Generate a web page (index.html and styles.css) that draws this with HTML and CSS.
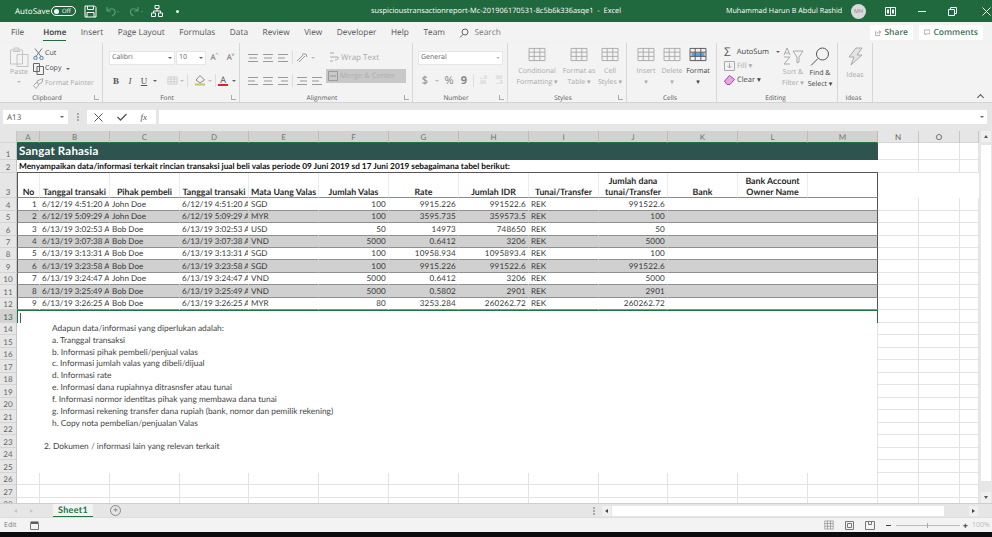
FILE: index.html
```html
<!DOCTYPE html>
<html lang="en">
<head>
<meta charset="utf-8">
<title>Excel</title>
<link rel="stylesheet" href="styles.css">
</head>
<body>
<svg class="defs" width="0" height="0">
  <symbol id="lines-c" viewBox="0 0 12 10"><path d="M1 1.500h10M2 5h8M1 8.500h10" fill="none" stroke="currentColor"/></symbol>
  <symbol id="lines-l" viewBox="0 0 12 10"><path d="M1 1.500h10M1 5h7M1 8.500h10" fill="none" stroke="currentColor"/></symbol>
  <symbol id="lines-r" viewBox="0 0 12 10"><path d="M1 1.500h10M4 5h7M1 8.500h10" fill="none" stroke="currentColor"/></symbol>
  <symbol id="tbl" viewBox="0 0 20 16"><path d="M1.500 1.500h17v13h-17zM1.500 5.500h17M1.500 10h17M7 1.500v13M13 1.500v13" fill="none" stroke="currentColor"/></symbol>
</svg>

<div class="app">
  <header class="title">
    <div class="qa">
      <span class="autosave">AutoSave</span>
      <span class="toggle"><i></i>Off</span>
      <svg class="ic-save" width="13" height="13" viewBox="0 0 13 13"><path d="M1 1h9.500L12 2.500V12H1zM3.500 1v3.500h6V1M3 12V7.500h7V12" fill="none" stroke="#fff"/></svg>
      <svg class="ic-undo" width="14" height="11" viewBox="0 0 14 11"><path d="M2 1v4h4M2 5c2-3 7-3 8 0s-1 4-3 5" fill="none" stroke="#5c9a78" stroke-width="1.200"/><path d="M12 5h2l-1 1.500z" fill="#5c9a78"/></svg>
      <svg class="ic-redo" width="14" height="11" viewBox="0 0 14 11"><path d="M9 1v4H5M9 5C7 2 2 2 1.500 5s1 4 3 5" fill="none" stroke="#5c9a78" stroke-width="1.200"/><path d="M12 5h2l-1 1.500z" fill="#5c9a78"/></svg>
      <svg class="ic-tree" width="12" height="12" viewBox="0 0 12 12"><path d="M4 .5h4v3H4zM.5 8h4v3.500h-4zM7.500 8h4v3.500h-4zM6 3.500V6M2.500 8V6h7v2" fill="none" stroke="#fff"/></svg>
      <span class="qa-more"></span>
    </div>
    <div class="docname">suspicioustransactionreport-Mc-201906170531-8c5b6k336asqe1&nbsp; -&nbsp; Excel</div>
    <div class="win">
      <span class="user">Muhammad Harun B Abdul Rashid</span>
      <span class="avatar">MH</span>
      <svg class="ic-ribbon" width="11" height="9" viewBox="0 0 11 9"><path d="M.5.500h10v8H.5zM5.500.5v8" fill="none" stroke="#fff"/><path d="M2 2.500h2v4H2zM7 2.500h2v4H7z" fill="#fff"/></svg>
      <span class="min"></span>
      <svg class="ic-max" width="9" height="9" viewBox="0 0 9 9"><path d="M.5 2.500h6v6h-6zM2.500 2.500v-2h6v6h-2" fill="none" stroke="#fff"/></svg>
      <svg class="ic-close" width="9" height="9" viewBox="0 0 9 9"><path d="M.5.5l8 8M8.500.5l-8 8" stroke="#fff" fill="none"/></svg>
    </div>
  </header>

  <nav class="tabs">
    <span class="tab t-file">File</span>
    <span class="tab active">Home</span>
    <span class="tab">Insert</span>
    <span class="tab">Page Layout</span>
    <span class="tab">Formulas</span>
    <span class="tab">Data</span>
    <span class="tab">Review</span>
    <span class="tab">View</span>
    <span class="tab">Developer</span>
    <span class="tab">Help</span>
    <span class="tab">Team</span>
    <span class="tab search"><svg width="10" height="10" viewBox="0 0 10 10"><circle cx="6" cy="4" r="3" fill="none" stroke="#666"/><path d="M4 6.500L1 9.500" stroke="#666"/></svg>Search</span>
    <span class="tab-actions">
      <span class="pill share"><svg width="10" height="10" viewBox="0 0 10 10"><path d="M6 1l3 2.500L6 6M9 3.500H6C4 3.500 3 5 3 6.500M7.500 7v2h-7V3H2" fill="none" stroke="#888"/></svg>Share</span>
      <span class="pill comments"><svg width="10" height="9" viewBox="0 0 10 9"><path d="M.5.500h9v6H4L2 8.500v-2H.5z" fill="none" stroke="#888"/></svg>Comments</span>
    </span>
  </nav>

  <section class="ribbon">
    <div class="grp g-clip">
      <div class="body clip-body">
        <div class="paste">
          <svg width="20" height="20" viewBox="0 0 20 20"><path d="M1.500 3h12v14h-12zM5 3V1h5v2M4 4.500h7M8 7.500h11v12H8z" fill="#f3f3f3" stroke="#c4c4c4"/></svg>
          <span class="dis">Paste</span>
          <span class="caret dis-caret"></span>
        </div>
        <div class="clip-list">
          <div class="clip-item"><svg width="11" height="12" viewBox="0 0 11 12"><path d="M2 .5l6 8M9 .5l-6 8" stroke="#777" fill="none"/><circle cx="2.500" cy="10" r="1.700" fill="none" stroke="#3f7fc1"/><circle cx="8.500" cy="10" r="1.700" fill="none" stroke="#3f7fc1"/></svg>Cut</div>
          <div class="clip-item"><svg width="11" height="12" viewBox="0 0 11 12"><path d="M.5.500h6v8h-6zM4 3.500h6.500v8H4z" fill="#f3f3f3" stroke="#666"/></svg>Copy<span class="caret copy-caret"></span></div>
          <div class="clip-item dis"><svg width="11" height="11" viewBox="0 0 11 11"><path d="M4 3l6-2.500-1 4-4 2zM4 4L.5 7.500 3 10.500 6 7" fill="none" stroke="#aaa"/></svg>Format Painter</div>
        </div>
      </div>
      <div class="label"><span>Clipboard</span><i class="launch"></i></div>
    </div>

    <div class="grp g-font">
      <div class="body stack">
        <div class="line">
          <span class="combo c-font">Calibri<i class="caret"></i></span>
          <span class="combo c-size">10<i class="caret"></i></span>
          <span class="grow">A<sup>^</sup></span>
          <span class="grow">A<sup>v</sup></span>
        </div>
        <div class="line fmt">
          <b class="f-btn">B</b>
          <i class="f-btn f-next">I</i>
          <u class="f-btn f-next">U</u>
          <span class="caret f-c1"></span>
          <svg class="f-border" width="11" height="11"><use href="#tbl"/></svg>
          <span class="caret dis-caret f-c2"></span>
          <span class="sep f-s"></span>
          <svg class="f-fill" width="12" height="11" viewBox="0 0 12 11"><path d="M6 .5L10.500 5 6 8 2 5z" fill="none" stroke="#888"/><path d="M1 9.500h10" stroke="#c9c46a" stroke-width="2"/></svg>
          <span class="caret dis-caret f-c2"></span>
          <span class="sep f-s"></span>
          <span class="fcolor">A</span>
          <span class="caret f-c3"></span>
        </div>
      </div>
      <div class="label"><span>Font</span><i class="launch"></i></div>
    </div>

    <div class="grp g-align">
      <div class="body align-body">
        <div class="stack align-icons">
          <div class="line">
            <svg class="i12"><use href="#lines-c"/></svg>
            <svg class="i12"><use href="#lines-c"/></svg>
            <svg class="i12"><use href="#lines-l"/></svg>
            <span class="sep"></span>
            <svg width="12" height="10" viewBox="0 0 12 10"><path d="M1 8l6-6M3 9l6-6M6 1h4l1 3" fill="none" stroke="currentColor"/></svg>
            <span class="caret dis-caret"></span>
          </div>
          <div class="line">
            <svg class="i12"><use href="#lines-l"/></svg>
            <svg class="i12"><use href="#lines-c"/></svg>
            <svg class="i12"><use href="#lines-r"/></svg>
            <span class="sep"></span>
            <svg class="i12"><use href="#lines-r"/></svg>
            <svg class="i12"><use href="#lines-l"/></svg>
          </div>
        </div>
        <div class="stack wrap-col">
          <div class="wrap dis"><svg width="10" height="11" viewBox="0 0 10 11"><path d="M1 1h4M1 5h8c1 2-1 3-3 3M1 9h3" fill="none" stroke="#aaa"/></svg>Wrap Text</div>
          <div class="merge"><svg width="10" height="10" viewBox="0 0 10 10"><path d="M.5.500h9v9h-9z" fill="none" stroke="#999"/><path d="M2 5h6" stroke="#999"/></svg>Merge &amp; Center</div>
        </div>
      </div>
      <div class="label"><span>Alignment</span><i class="launch"></i></div>
    </div>

    <div class="grp g-num">
      <div class="body stack">
        <div class="line"><span class="combo c-gen dis">General<i class="caret dis-caret"></i></span></div>
        <div class="line num-row">
          <span class="n-sym">$</span><span class="caret dis-caret"></span>
          <span class="n-sym">%</span><span class="n-sym n-comma">9</span>
          <span class="sep"></span>
          <span class="n-dec">←0<br>.00</span><span class="n-dec">.00<br>→0</span>
        </div>
      </div>
      <div class="label"><span>Number</span><i class="launch"></i></div>
    </div>

    <div class="grp g-styles">
      <div class="body bigs">
        <div class="big b-cond dis"><svg width="20" height="15" color="#aaa"><use href="#tbl"/></svg><span>Conditional<br>Formatting ▾</span></div>
        <div class="big b-fmt dis"><svg width="20" height="15" color="#aaa"><use href="#tbl"/></svg><span>Format as<br>Table ▾</span></div>
        <div class="big b-cell dis"><svg width="20" height="15" color="#aaa"><use href="#tbl"/></svg><span>Cell<br>Styles ▾</span></div>
      </div>
      <div class="label"><span>Styles</span><i class="launch"></i></div>
    </div>

    <div class="grp g-cells">
      <div class="body bigs">
        <div class="big b-c dis"><svg width="20" height="15" color="#aaa"><use href="#tbl"/></svg><span>Insert<br>▾</span></div>
        <div class="big b-c dis"><svg width="20" height="15" color="#aaa"><use href="#tbl"/></svg><span>Delete<br>▾</span></div>
        <div class="big b-c"><svg width="20" height="15" viewBox="0 0 20 16"><path d="M3 6h14v4H3z" fill="#5aa6e0"/><use href="#tbl" width="20" height="16" color="#555"/></svg><span>Format<br>▾</span></div>
      </div>
      <div class="label"><span>Cells</span></div>
    </div>

    <div class="grp g-edit">
      <div class="body edit-body">
        <div class="edit-list">
          <div class="edit-item"><span class="sigma">Σ</span>AutoSum<i class="caret"></i></div>
          <div class="edit-item dis"><svg width="11" height="10" viewBox="0 0 11 10"><path d="M.5.500h10v9H.5zM5.500 2v5M3.500 5l2 2 2-2" fill="none" stroke="#aaa"/></svg>Fill ▾</div>
          <div class="edit-item"><svg width="11" height="10" viewBox="0 0 11 10"><path d="M.5 6l5-5.500 5 4L6 9.500H3z" fill="#e8a8dc" stroke="#a24ab0"/></svg>Clear ▾</div>
        </div>
        <div class="big b-sort dis"><svg width="21" height="18" viewBox="0 0 21 18"><path d="M1 8l3-7 3 7M2 6h4M1 10h6l-6 7h6M10 4h10l-4 6v5l-2 1v-6z" fill="none" stroke="#aaa"/></svg><span>Sort &amp;<br>Filter ▾</span></div>
        <div class="big b-find"><svg width="20" height="19" viewBox="0 0 20 19"><circle cx="12.500" cy="7" r="6" fill="none" stroke="#555"/><path d="M8 11.500L1 18.500" stroke="#555"/></svg><span>Find &amp;<br>Select ▾</span></div>
      </div>
      <div class="label"><span>Editing</span></div>
    </div>

    <div class="grp g-ideas">
      <div class="body bigs">
        <div class="big b-idea dis"><svg width="15" height="19" viewBox="0 0 15 19"><path d="M8 1h6L9 8h5L3 18l3-8H1z" fill="#e4e4e4" stroke="#aaa"/></svg><span>Ideas</span></div>
      </div>
      <div class="label"><span>Ideas</span></div>
    </div>

    <div class="ribbon-end"><span class="collapse"></span></div>
  </section>

  <section class="fbar">
    <span class="namebox">A13<i class="caret"></i></span>
    <span class="grip"></span>
    <span class="fbtns">
      <svg width="9" height="9" viewBox="0 0 9 9"><path d="M.5.5l8 8M8.500.5l-8 8" stroke="#555" fill="none"/></svg>
      <svg width="10" height="8" viewBox="0 0 10 8"><path d="M.5 4l3 3L9.500 1" stroke="#555" stroke-width="1.300" fill="none"/></svg>
      <em>fx</em>
    </span>
    <span class="finput"><i class="caret"></i></span>
  </section>

  <section class="sheetwrap">
    <div class="sheet">
      <table class="grid">
        <colgroup>
          <col class="c-h"><col class="c-a">
          <col class="c70"><col class="c70"><col class="c69"><col class="c70"><col class="c70"><col class="c70">
          <col class="c70"><col class="c70"><col class="c69"><col class="c70"><col class="c70"><col class="c70">
          <col class="c-n"><col class="c-n"><col class="c-p">
        </colgroup>
        <thead>
          <tr class="r12">
            <th class="corner"></th>
            <th class="sel">A</th><th class="sel">B</th><th class="sel">C</th><th class="sel">D</th><th class="sel">E</th><th class="sel">F</th><th class="sel">G</th><th class="sel">H</th><th class="sel">I</th><th class="sel">J</th><th class="sel">K</th><th class="sel">L</th><th class="sel">M</th>
            <th class="unsel">N</th><th class="unsel">O</th><th class="unsel"></th>
          </tr>
        </thead>
        <tbody>
          <tr class="r17"><th>1</th><td colspan="13" class="banner">Sangat Rahasia</td><td></td><td></td><td></td></tr>
          <tr class="r13"><th>2</th><td colspan="13" class="intro">Menyampaikan data/informasi terkait rincian transaksi jual beli valas periode 09 Juni 2019 sd 17 Juni 2019 sebagaimana tabel berikut:</td><td></td><td></td><td></td></tr>
          <tr class="r24 hd"><th>3</th><td class="first">No</td><td>Tanggal transaki</td><td>Pihak pembeli</td><td>Tanggal transaki</td><td>Mata Uang Valas</td><td>Jumlah Valas</td><td>Rate</td><td>Jumlah IDR</td><td>Tunai/Transfer</td><td>Jumlah dana<br>tunai/Transfer</td><td>Bank</td><td>Bank Account<br>Owner Name</td><td class="last"></td></tr>
          <tr class="r13 dt"><th>4</th><td class="first n">1</td><td>6/12/19 4:51:20 A</td><td>John Doe</td><td>6/12/19 4:51:20 A</td><td>SGD</td><td class="n">100</td><td class="n">9915.226</td><td class="n">991522.6</td><td>REK</td><td class="n">991522.6</td><td colspan="3" class="last"></td><td></td><td></td><td></td></tr>
          <tr class="r12 dt band"><th>5</th><td class="first n">2</td><td>6/12/19 5:09:29 A</td><td>John Doe</td><td>6/12/19 5:09:29 A</td><td>MYR</td><td class="n">100</td><td class="n">3595.735</td><td class="n">359573.5</td><td>REK</td><td class="n">100</td><td colspan="3" class="last"></td><td class="pl"></td><td class="pl"></td><td class="pl"></td></tr>
          <tr class="r13 dt"><th>6</th><td class="first n">3</td><td>6/13/19 3:02:53 A</td><td>Bob Doe</td><td>6/13/19 3:02:53 A</td><td>USD</td><td class="n">50</td><td class="n">14973</td><td class="n">748650</td><td>REK</td><td class="n">50</td><td colspan="3" class="last"></td><td></td><td></td><td></td></tr>
          <tr class="r12 dt band"><th>7</th><td class="first n">4</td><td>6/13/19 3:07:38 A</td><td>Bob Doe</td><td>6/13/19 3:07:38 A</td><td>VND</td><td class="n">5000</td><td class="n">0.6412</td><td class="n">3206</td><td>REK</td><td class="n">5000</td><td colspan="3" class="last"></td><td class="pl"></td><td class="pl"></td><td class="pl"></td></tr>
          <tr class="r12 dt"><th>8</th><td class="first n">5</td><td>6/13/19 3:13:31 A</td><td>Bob Doe</td><td>6/13/19 3:13:31 A</td><td>SGD</td><td class="n">100</td><td class="n">10958.934</td><td class="n">1095893.4</td><td>REK</td><td class="n">100</td><td colspan="3" class="last"></td><td></td><td></td><td></td></tr>
          <tr class="r13 dt band"><th>9</th><td class="first n">6</td><td>6/13/19 3:23:58 A</td><td>Bob Doe</td><td>6/13/19 3:23:58 A</td><td>SGD</td><td class="n">100</td><td class="n">9915.226</td><td class="n">991522.6</td><td>REK</td><td class="n">991522.6</td><td colspan="3" class="last"></td><td class="pl"></td><td class="pl"></td><td class="pl"></td></tr>
          <tr class="r12 dt"><th>10</th><td class="first n">7</td><td>6/13/19 3:24:47 A</td><td>John Doe</td><td>6/13/19 3:24:47 A</td><td>VND</td><td class="n">5000</td><td class="n">0.6412</td><td class="n">3206</td><td>REK</td><td class="n">5000</td><td colspan="3" class="last"></td><td></td><td></td><td></td></tr>
          <tr class="r13 dt band"><th>11</th><td class="first n">8</td><td>6/13/19 3:25:49 A</td><td>Bob Doe</td><td>6/13/19 3:25:49 A</td><td>VND</td><td class="n">5000</td><td class="n">0.5802</td><td class="n">2901</td><td>REK</td><td class="n">2901</td><td colspan="3" class="last"></td><td class="pl"></td><td class="pl"></td><td class="pl"></td></tr>
          <tr class="r12 dt"><th>12</th><td class="first n">9</td><td>6/13/19 3:26:25 A</td><td>Bob Doe</td><td>6/13/19 3:26:25 A</td><td>MYR</td><td class="n">80</td><td class="n">3253.284</td><td class="n">260262.72</td><td>REK</td><td class="n">260262.72</td><td colspan="3" class="last"></td><td></td><td></td><td></td></tr>
          <tr class="r13"><th class="hsel">13</th><td colspan="13" class="active-cell"><span class="cursor"></span></td><td></td><td></td><td></td></tr>
          <tr class="r12"><th>14</th><td colspan="13" class="blank"></td><td></td><td></td><td></td></tr>
          <tr class="r13"><th>15</th><td colspan="13" class="blank"></td><td></td><td></td><td></td></tr>
          <tr class="r12"><th>16</th><td colspan="13" class="blank"></td><td></td><td></td><td></td></tr>
          <tr class="r13"><th>17</th><td colspan="13" class="blank"></td><td></td><td></td><td></td></tr>
          <tr class="r12"><th>18</th><td colspan="13" class="blank"></td><td></td><td></td><td></td></tr>
          <tr class="r13"><th>19</th><td colspan="13" class="blank"></td><td></td><td></td><td></td></tr>
          <tr class="r12"><th>20</th><td colspan="13" class="blank"></td><td></td><td></td><td></td></tr>
          <tr class="r13"><th>21</th><td colspan="13" class="blank"></td><td></td><td></td><td></td></tr>
          <tr class="r12"><th>22</th><td colspan="13" class="blank"></td><td></td><td></td><td></td></tr>
          <tr class="r13"><th>23</th><td colspan="13" class="blank"></td><td></td><td></td><td></td></tr>
          <tr class="r12"><th>24</th><td colspan="13" class="blank"></td><td></td><td></td><td></td></tr>
          <tr class="r13"><th>25</th><td colspan="13" class="blank"></td><td></td><td></td><td></td></tr>
          <tr class="r12"><th>26</th><td></td><td></td><td></td><td></td><td></td><td></td><td></td><td></td><td></td><td></td><td></td><td></td><td></td><td></td><td></td><td></td></tr>
          <tr class="r13"><th>27</th><td></td><td></td><td></td><td></td><td></td><td></td><td></td><td></td><td></td><td></td><td></td><td></td><td></td><td></td><td></td><td></td></tr>
          <tr class="r12"><th>28</th><td></td><td></td><td></td><td></td><td></td><td></td><td></td><td></td><td></td><td></td><td></td><td></td><td></td><td></td><td></td><td></td></tr>
        </tbody>
      </table>
      <div class="textbox">
        <p>Adapun data/informasi yang diperlukan adalah:</p>
        <p>a. Tranggal transaksi</p>
        <p>b. Informasi pihak pembeli/penjual valas</p>
        <p>c. Informasi jumlah valas yang dibeli/dijual</p>
        <p>d. Informasi rate</p>
        <p>e. Informasi dana rupiahnya ditrasnsfer atau tunai</p>
        <p>f. Informasi normor identitas pihak yang membawa dana tunai</p>
        <p>g. Informasi rekening transfer dana rupiah (bank, nomor dan pemilik rekening)</p>
        <p>h. Copy nota pembelian/penjualan Valas</p>
        <p class="item2">2. Dokumen / informasi lain yang relevan terkait</p>
      </div>
    </div>
    <div class="vscroll">
      <span class="sb-btn"><i class="tri up"></i></span>
      <span class="sb-thumb"></span>
      <span class="sb-rest"></span>
      <span class="sb-btn"><i class="tri down"></i></span>
    </div>
  </section>

  <section class="tabbar">
    <span class="tb-nav"><i class="tri left"></i><i class="tri right"></i></span>
    <span class="sheet-tab">Sheet1</span>
    <span class="add">+</span>
    <span class="tb-grip"></span>
    <span class="hscroll">
      <span class="hs-btn"><i class="tri left dark"></i></span>
      <span class="hs-thumb"></span>
      <span class="hs-btn hs-end"><i class="tri right dark"></i></span>
    </span>
  </section>

  <footer class="status">
    <span class="mode">Edit</span>
    <svg width="9" height="9" viewBox="0 0 9 9"><path d="M.5 2.500h8v6h-8z" fill="none" stroke="#777"/><path d="M.5.500h8v2h-8z" fill="#555"/></svg>
    <span class="status-right">
      <svg width="10" height="10" color="#777" viewBox="0 0 20 16" preserveAspectRatio="none"><use href="#tbl"/></svg>
      <svg width="9" height="9" viewBox="0 0 9 9"><path d="M.5.500h8v8h-8zM2.500 2.500h4v4h-4z" fill="none" stroke="#777"/></svg>
      <svg width="10" height="9" viewBox="0 0 10 9"><path d="M.5.500h9v8h-9zM3.500.5v3h3v-3" fill="none" stroke="#777"/></svg>
      <span class="zoom-minus"></span>
      <span class="slider"><i></i></span>
      <span class="zoom-plus">+</span>
      <span class="pct">100%</span>
    </span>
  </footer>
  <div class="taskbar"></div>
</div>
</body>
</html>
```

FILE: styles.css
```css
* { box-sizing: border-box; }
html, body { margin: 0; height: 100%; }
body { font-family: "Open Sans", "Liberation Sans", sans-serif; background: #000; overflow: hidden; text-rendering: geometricPrecision; }
.defs { position: absolute; }
.app { display: flex; flex-direction: column; width: 992px; height: 537px; overflow: hidden; }

/* title bar */
.title { display: flex; align-items: center; height: 22px; background: #20693f; color: #fff; font-size: 8px; flex: none; }
.qa { display: flex; align-items: center; width: 371px; padding-left: 15px; }
.autosave { width: 36px; }
.toggle { display: flex; align-items: center; gap: 3px; width: 25px; height: 10px; border: 1px solid #fff; border-radius: 5px; font-size: 6px; padding-left: 2px; }
.toggle i { width: 5px; height: 5px; border-radius: 50%; background: #fff; }
.ic-save { margin-left: 8px; }
.ic-undo { margin-left: 8px; }
.ic-redo { margin-left: 10px; }
.ic-tree { margin-left: 8px; }
.qa-more { width: 3px; height: 3px; background: #dfe; margin-left: 13px; border-radius: 50%; }
.docname { width: 355px; font-size: 7.400px; white-space: nowrap; }
.win { display: flex; align-items: center; }
.user { width: 125px; white-space: nowrap; font-size: 7.200px; flex: none; }
.avatar { width: 15px; height: 15px; border-radius: 50%; background: #d9d9d9; color: #888; font-size: 5.500px; display: flex; align-items: center; justify-content: center; flex: none; }
.ic-ribbon { margin-left: 19px; }
.min { width: 8px; height: 1px; background: #fff; margin-left: 22px; }
.ic-max { margin-left: 22px; }
.ic-close { margin-left: 25px; }

/* tabs */
.tabs { display: flex; align-items: center; height: 21px; background: #f3f3f3; color: #555; font-size: 8.300px; padding-left: 11px; flex: none; }
.tab { margin-right: 14.500px; white-space: nowrap; line-height: 16px; }
.t-file { margin-right: 19px; }
.tab.active { font-weight: 600; font-size: 8px; color: #333; border-bottom: 1.500px solid #20693f; line-height: 14px; margin-top: 1px; }
.search { display: flex; align-items: center; gap: 5px; color: #777; }
.tab-actions { display: flex; gap: 6px; margin-left: auto; padding-right: 9px; }
.pill { display: flex; align-items: center; gap: 3px; height: 15px; background: #fff; padding: 0 5px; color: #41705a; font-weight: 600; font-size: 8.500px; }
.share { width: 43px; }
.comments { width: 64px; }

/* ribbon */
.ribbon { display: flex; height: 60px; background: #f3f3f3; border-bottom: 1px solid #d4d4d4; box-shadow: 0 1px 2px rgba(0,0,0,.12); font-size: 7px; color: #444; flex: none; }
.grp { display: flex; flex-direction: column; border-right: 1px solid #d6d6d6; flex: none; }
.body { flex: 1; display: flex; min-height: 0; }
.label { display: flex; align-items: center; height: 9px; font-size: 6.500px; color: #555; flex: none; padding-right: 3px; }
.label span { flex: 1; text-align: center; }
.launch { width: 5px; height: 5px; border-left: 1px solid #aaa; border-bottom: 1px solid #aaa; }
.dis { color: #aaa; }
.caret { display: inline-block; width: 0; height: 0; border: 2px solid transparent; border-top: 2.500px solid #666; border-bottom: 0; flex: none; }
.dis-caret { border-top-color: #bbb; }
.stack { flex-direction: column; }
.line { display: flex; align-items: center; height: 23px; flex: none; }
.sep { width: 1px; height: 13px; background: #ddd; flex: none; }

.g-clip { width: 103px; }
.clip-body { padding: 4px 0 0 6px; }
.paste { width: 26px; display: flex; flex-direction: column; align-items: center; gap: 1px; line-height: 9px; }
.paste .caret { margin-top: 3px; }
.clip-list { display: flex; flex-direction: column; margin: -1px 0 0 1px; }
.clip-item { display: flex; align-items: center; gap: 1px; height: 15px; white-space: nowrap; }
.copy-caret { margin-left: 4px; }

.g-font { width: 137px; }
.g-font .body { padding: 3px 0 0 6px; }
.combo { display: flex; align-items: center; justify-content: space-between; height: 14px; background: #fff; padding: 0 2px; border: 1px solid #e6e6e6; font-size: 7px; color: #666; }
.c-font { width: 66px; }
.c-size { width: 30px; margin-left: 1px; }
.grow { width: 15px; margin-left: 1px; text-align: center; font-size: 8px; color: #666; }
.grow sup { font-size: 5px; line-height: 0; }
.fmt { padding-left: 3px; color: #555; font-size: 9px; }
.fmt > * { flex: none; }
.f-btn { width: 8px; text-align: center; font-family: "Liberation Serif", serif; }
.f-next { margin-left: 6px; }
.f-c1 { margin-left: 5px; }
.f-border { color: #bbb; margin-left: 10px; }
.f-c2 { margin-left: 2px; }
.f-s { margin-left: 3px; }
.f-fill { margin-left: 6px; }
.fcolor { font-size: 9px; border-bottom: 2px solid #d8232a; line-height: 9px; width: 10px; text-align: center; margin-left: 2px; }
.f-c3 { margin-left: 4px; }

.g-align { width: 173px; }
.align-body { padding: 3px 0 0 7px; color: #999; }
.align-icons { display: flex; width: 79px; }
.align-icons .line { gap: 3px; }
.i12 { width: 12px; height: 10px; }
.wrap-col { display: flex; width: 86px; }
.wrap { display: flex; align-items: center; gap: 2px; height: 22px; font-size: 8px; padding-left: 3px; }
.merge { display: flex; align-items: center; gap: 2px; height: 14px; width: 80px; margin-top: 1px; background: #c8c8c8; color: #aeaeae; padding-left: 2px; font-size: 7.500px; white-space: nowrap; }

.g-num { width: 95px; }
.g-num .body { padding: 3px 0 0 5px; }
.c-gen { width: 85px; }
.num-row { gap: 5px; padding-left: 2px; color: #888; }
.num-row > * { flex: none; }
.n-sym { font-size: 11px; width: 10px; text-align: center; }
.n-comma { font-weight: 700; width: 8px; margin-left: 1px; }
.n-dec { font-size: 5px; line-height: 5px; width: 11px; color: #bbb; }

.bigs { padding-top: 4px; }
.big { display: flex; flex-direction: column; align-items: center; text-align: center; line-height: 11px; white-space: nowrap; flex: none; }
.big span { margin-top: 4px; }
.g-styles { width: 119px; }
.g-styles .bigs { padding-left: 6px; }
.b-cond { width: 46px; }
.b-fmt { width: 38px; }
.b-cell { width: 24px; }
.g-cells { width: 90px; }
.g-cells .bigs { padding-left: 6px; }
.b-c { width: 26px; }
.g-edit { width: 121px; }
.edit-body { padding: 2px 0 0 7px; }
.edit-list { display: flex; flex-direction: column; width: 56px; }
.edit-item { display: flex; align-items: center; gap: 2px; height: 14px; font-size: 7.500px; white-space: nowrap; }
.edit-item .caret { margin-left: 5px; }
.sigma { font-size: 12px; width: 11px; color: #555; line-height: 12px; }
.b-sort { width: 26px; margin-top: 2px; }
.b-find { width: 28px; margin-top: 2px; }
.b-find span, .b-sort span { margin-top: 2px; }
.g-ideas { width: 35px; }
.b-idea { width: 100%; }
.ribbon-end { flex: 1; display: flex; align-items: flex-end; justify-content: flex-end; padding: 0 9px 2px 0; }
.collapse { width: 5px; height: 5px; border-left: 1px solid #555; border-top: 1px solid #555; transform: rotate(45deg); }

/* formula bar */
.fbar { display: flex; align-items: center; height: 28px; padding: 0 5px 0 3px; background: #e6e6e6; font-size: 8px; color: #555; flex: none; }
.namebox { display: flex; align-items: center; justify-content: space-between; width: 65px; height: 14px; background: #fff; padding: 0 4px; }
.grip { width: 2px; height: 8px; margin-left: 9px; border-left: 2px dotted #aaa; }
.fbtns { display: flex; align-items: center; justify-content: space-between; width: 69px; height: 14px; background: #fff; margin-left: 8px; padding: 0 9px 0 7px; }
.fbtns em { font-family: "Liberation Serif", serif; font-size: 9px; }
.finput { display: flex; align-items: center; justify-content: flex-end; flex: 1; height: 14px; background: #fff; margin-left: 3px; padding-right: 3px; }

/* sheet */
.sheetwrap { display: flex; height: 372px; background: #fff; flex: none; overflow: hidden; }
.sheet { position: relative; width: 979px; overflow: hidden; }
.grid { border-collapse: separate; border-spacing: 0; table-layout: fixed; width: 979px; font-family: Lato, "Liberation Sans", sans-serif; font-size: 8.100px; color: #3a3a3a; }
.c-h { width: 17px; } .c-a { width: 23px; } .c70 { width: 70px; } .c69 { width: 69px; } .c-n { width: 41px; } .c-p { width: 19px; }
.r12 { height: 12px; } .r13 { height: 13px; } .r17 { height: 17px; } .r24 { height: 25px; }
.grid th { background: #e6e6e6; font-weight: 400; color: #666; font-size: 8px; padding: 0; border-right: 1px solid #c6c6c6; border-bottom: 1px solid #d4d4d4; line-height: 10px; }
.grid tbody th { vertical-align: bottom; }
.grid thead th { color: #777; }
.grid thead .sel { background: #d2d2d2; border-right-color: #bcbcbc; border-bottom: 1px solid #217346; color: #6a7a70; }
.grid thead .unsel { color: #555; }
.corner { background: #e6e6e6; }
.grid .hsel { background: #d2d2d2; color: #2f6a48; }
.grid td { padding: 0 0 0 2px; border-right: 1px solid #e3e3e3; border-bottom: 1px solid #e3e3e3; white-space: nowrap; overflow: hidden; line-height: 11px; vertical-align: bottom; }
.grid .n { text-align: right; padding-right: 2px; letter-spacing: .2px; }
.grid .banner { background: #2e5450; color: #fff; font-size: 11.500px; font-weight: 700; letter-spacing: .2px; line-height: 16px; vertical-align: middle; padding-left: 2px; border: 0; }
.grid .intro { background: #fff; color: #111; font-weight: 700; font-size: 8.270px; border-bottom: 1px solid #555; border-right: 0; padding-left: 2px; }
.hd td { font-size: 8.800px; font-weight: 700; text-align: center; color: #2a2a2a; background: #fff; border-bottom: 1px solid #8a8a8a; border-right-color: #ececec; white-space: nowrap; padding: 0; }
.grid .first { border-left: 1px solid #555; }
.grid .last { border-right: 1px solid #555; }
.dt td { background: #fff; border-right-color: #fff; border-bottom: 1px solid #8f8f8f; }
.dt.band td { background: #d0d0d0; border-right-color: #d0d0d0; }
.dt.band .last, .dt .last { border-right-color: #555; }
.dt.band td.pl { background: #fff; border-right-color: #e3e3e3; border-bottom-color: #e3e3e3; }
.dt th + td ~ td.last ~ td { background: #fff; border-right-color: #e3e3e3; border-bottom-color: #e3e3e3; }
.grid .active-cell { border-top: 1px solid #217346; border-right: 1.500px solid #217346; border-left: 1px solid #217346; border-bottom: 0; background: #fff; }
.cursor { display: block; width: 1px; height: 10px; background: #555; }
.grid .blank { background: #fff; border-right: 1px solid #e3e3e3; border-bottom: 0; }

.textbox { position: absolute; left: 44px; top: 192px; font-family: Lato, "Liberation Sans", sans-serif; font-size: 8.360px; line-height: 11.830px; color: #444; }
.textbox p { margin: 0 0 0 8px; white-space: nowrap; }
.textbox .item2 { margin: 11.830px 0 0 0; }

/* vertical scrollbar */
.vscroll { display: flex; flex-direction: column; width: 13px; background: #e6e6e6; padding: 0 1px 0 2px; flex: none; }
.sb-btn { display: flex; align-items: center; justify-content: center; height: 11px; background: #f0f0f0; flex: none; }
.sb-thumb { height: 336px; background: #fff; margin-top: 3px; }
.sb-rest { flex: 1; }
.tri { display: inline-block; width: 0; height: 0; border: 2px solid transparent; }
.tri.up { border-bottom: 3px solid #555; border-top: 0; }
.tri.down { border-top: 3px solid #555; border-bottom: 0; }
.tri.left { border-right: 3px solid #c4c4c4; border-left: 0; }
.tri.right { border-left: 3px solid #c4c4c4; border-right: 0; }
.tri.left.dark { border-right-color: #444; }
.tri.right.dark { border-left-color: #444; }

/* tab bar */
.tabbar { display: flex; align-items: center; height: 14px; background: #e6e6e6; border-top: 1px solid #cfcfcf; flex: none; }
.tb-nav { display: flex; gap: 13px; width: 53px; padding-left: 14px; }
.sheet-tab { width: 40px; height: 13px; background: #f3f3f3; border-bottom: 1.500px solid #217346; color: #217346; font-family: Lato, sans-serif; font-size: 9px; font-weight: 700; text-align: center; line-height: 12px; letter-spacing: .3px; }
.add { width: 11px; height: 11px; margin-left: 17px; border: 1px solid #888; border-radius: 50%; color: #777; font-size: 9px; line-height: 8px; text-align: center; }
.tb-grip { width: 2px; height: 8px; border-left: 2px dotted #aaa; margin-left: 472px; }
.hscroll { display: flex; align-items: center; width: 376px; height: 10px; margin-left: 7px; }
.hs-btn { display: flex; align-items: center; justify-content: center; width: 9px; height: 10px; background: #f0f0f0; flex: none; }
.hs-thumb { width: 332px; height: 10px; background: #fff; margin-left: 1px; }
.hs-end { margin-left: auto; }

/* status */
.status { display: flex; align-items: center; gap: 19px; height: 15px; background: #f3f3f3; border-top: 1px solid #dedede; padding-left: 4px; font-size: 7px; color: #777; flex: none; }
.mode { width: 7px; }
.status-right { display: flex; align-items: center; margin-left: auto; gap: 11px; padding-right: 4px; }
.zoom-minus { width: 5px; height: 1px; background: #444; }
.slider { width: 64px; height: 1px; background: #bbb; margin-left: -6px; display: flex; justify-content: center; }
.slider i { width: 1px; height: 5px; margin-top: -2px; background: #aaa; }
.zoom-plus { font-size: 9px; color: #444; margin-left: -8px; font-weight: 700; }
.pct { color: #bbb; margin-left: -7px; width: 16px; font-size: 7px; }
.taskbar { flex: 1; background: #0c0c10; }
```
